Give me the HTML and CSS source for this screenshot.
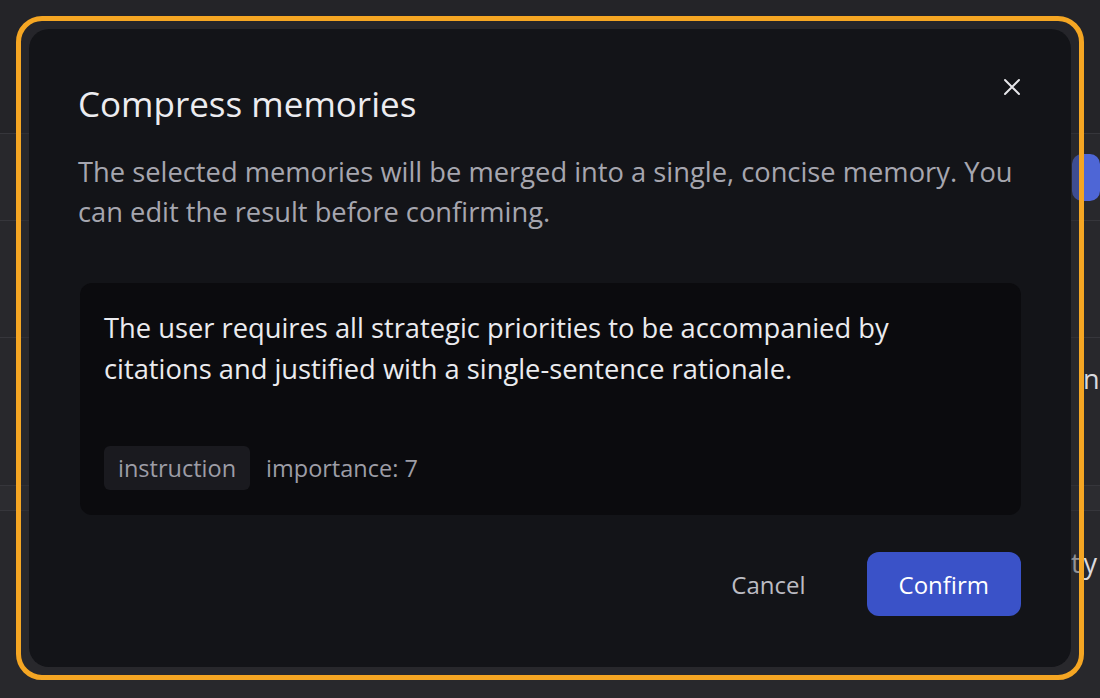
FILE: index.html
```html
<!DOCTYPE html>
<html lang="en">
<head>
  <meta charset="UTF-8">
  <meta name="viewport" content="width=device-width, initial-scale=1.0">
  <title>Memories</title>
  <link rel="stylesheet" href="styles.css">
</head>
<body>
  <div class="page">
    <div class="row row-head"></div>
    <div class="row row-short"><span class="row-action"></span></div>
    <div class="row row-tall"></div>
    <div class="row row-text row-name"><span class="row-label">name</span></div>
    <div class="row row-band"></div>
    <div class="row row-text row-type"><span class="row-label">ty</span></div>
  </div>

  <div class="frame">
    <div class="dialog" role="dialog" aria-labelledby="dlgTitle">
      <button class="close" aria-label="Close">
        <svg width="18" height="18" viewBox="0 0 18 18" fill="none" stroke="currentColor" stroke-width="2" stroke-linecap="round">
          <path d="M2 2l14 14M16 2L2 16"/>
        </svg>
      </button>

      <h2 id="dlgTitle" class="title">Compress memories</h2>
      <p class="desc">The selected memories will be merged into a single, concise memory. You can edit the result before confirming.</p>

      <div class="memory">
        <p class="memory-text">The user requires all strategic priorities to be accompanied by citations and justified with a single-sentence rationale.</p>
        <div class="memory-meta">
          <span class="tag">instruction</span>
          <span class="importance">importance: 7</span>
        </div>
      </div>

      <div class="actions">
        <button class="btn btn-ghost">Cancel</button>
        <button class="btn btn-primary">Confirm</button>
      </div>
    </div>
  </div>
</body>
</html>
```

FILE: styles.css
```css
html {
  box-sizing: border-box;
}
*, *:before, *:after {
  box-sizing: inherit;
}
body {
  margin: 0;
  height: 698px;
  overflow: hidden;
  background: #222226;
  font-family: "Open Sans", "Noto Sans", sans-serif;
  color: #ececf0;
}

/* list behind the modal */
.page { width: 1100px; }
.row { display: flex; align-items: center; background: #28282c; border-bottom: 1px solid #36363b; }
.row-head { height: 134px; background: #242428; }
.row-short { height: 87px; }
.row-tall { height: 117px; }
.row-text { height: 148px; align-items: flex-start; }
.row-band { height: 25px; background: #2c2c30; }
.row-type { height: 190px; }
.row-action { margin-left: 1072px; width: 40px; height: 47px; background: #4e66d6; border-radius: 10px; }
.row-label { font-size: 27px; line-height: 37px; color: #dadade; white-space: nowrap; }
.row-name .row-label { margin: 22px 0 0 1083px; }
.row-type .row-label { margin: 33px 0 0 1071px; letter-spacing: 3px; }

/* modal */
.frame {
  position: fixed;
  top: 16px;
  left: 16px;
  width: 1068px;
  height: 664px;
  padding: 8px;
  border: 5px solid #f5a623;
  border-radius: 26px;
  background: rgba(40, 40, 44, 0.4);
}
.dialog {
  position: relative;
  height: 100%;
  padding: 53px 50px 51px 49px;
  background: #131418;
  border-radius: 20px;
  display: flex;
  flex-direction: column;
}
.close {
  position: absolute;
  top: 43px;
  right: 44px;
  width: 30px;
  height: 30px;
  padding: 0;
  border: 0;
  background: none;
  color: #e6e6ea;
  display: flex;
  align-items: center;
  justify-content: center;
}
.title {
  margin: 0;
  font-size: 35px;
  line-height: 44px;
  font-weight: 500;
  color: #ececf0;
}
.desc {
  margin: 26px 0 0;
  font-size: 27.3px;
  line-height: 40px;
  color: #a6a6af;
}
.memory {
  margin: 51px 0 0 2px;
  padding: 24px 24px 25px;
  background: #0b0b0e;
  border-radius: 12px;
}
.memory-text {
  margin: 0;
  font-size: 27.3px;
  line-height: 41px;
  color: #ebebef;
}
.memory-meta {
  margin-top: 57px;
  display: flex;
  align-items: center;
  gap: 16px;
}
.tag {
  height: 44px;
  padding: 0 14px;
  display: flex;
  align-items: center;
  background: #1a1a1f;
  border-radius: 6px;
  font-size: 23.5px;
  color: #9d9da6;
}
.importance { font-size: 23.5px; color: #9d9da6; }
.actions {
  margin-top: 37px;
  display: flex;
  justify-content: flex-end;
  gap: 29px;
}
.btn {
  height: 64px;
  padding: 0 32px;
  border: 0;
  border-radius: 12px;
  font-family: inherit;
  font-size: 24px;
  font-weight: 500;
  cursor: pointer;
}
.btn-ghost { background: none; color: #bcbcc3; }
.btn-primary { background: #3a52c8; color: #fff; }
```
